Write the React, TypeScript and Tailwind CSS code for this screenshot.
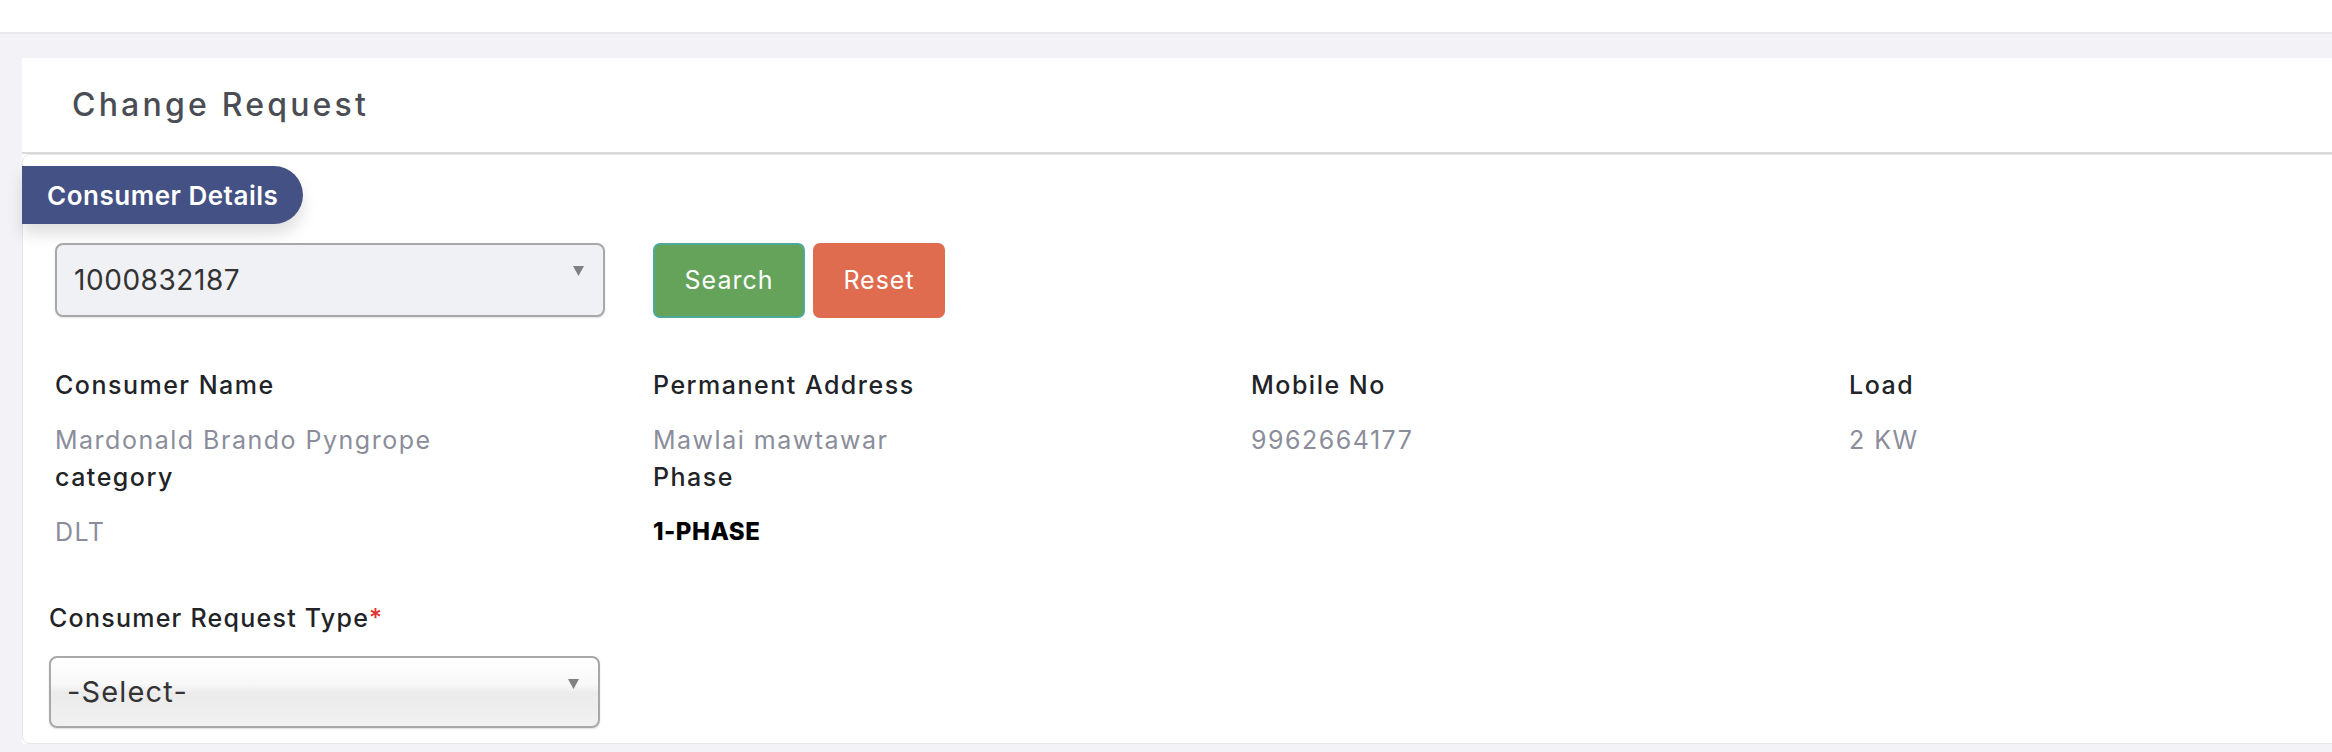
import React from "react";

function Arrow() {
  return (
    <svg width="11" height="10" viewBox="0 0 11 10" className="absolute right-[19px] top-[21px]">
      <polygon points="0,0 11,0 5.5,10" fill="#808080" />
    </svg>
  );
}

function Field({ label, value, strong }: { label: string; value: string; strong?: boolean }) {
  return (
    <div className="px-[24px]">
      <div className="mb-[18px] text-[25px] font-medium leading-[36px] tracking-[0.06em] text-[#212327]">{label}</div>
      <div
        className={
          strong
            ? "text-[24px] font-extrabold leading-[38px] tracking-[0.02em] text-[#000000]"
            : "text-[25px] font-normal leading-[38px] tracking-[0.06em] text-[#8b8d9b]"
        }
      >
        {value}
      </div>
    </div>
  );
}

export default function App() {
  return (
    <div className="h-screen w-full overflow-hidden bg-[#f2f2f7] font-['Inter',sans-serif]">
      <div className="h-[34px] border-b-2 border-[#e7e7ec] bg-white" />
      <div className="pl-[22px] pt-[24px]">
        <div className="w-[2500px] bg-white">
          <div className="flex h-[96px] items-center border-b-2 border-[#d9d9d9] pl-[50px]">
            <h1 className="text-[32px] font-medium tracking-[0.1em] text-[#4a4d54]">Change Request</h1>
          </div>
          <div className="rounded-l-[8px] border border-[#e6e6ea] pb-[15px]">
            <div className="mt-[11px] -ml-px inline-flex h-[58px] items-center rounded-r-full bg-[#435184] pl-[25px] pr-[25px] text-[26px] font-semibold tracking-[0.02em] text-white shadow-[0_10px_16px_rgba(0,0,0,0.13)]">
              Consumer Details
            </div>
            <div className="ml-[8px] mt-[19px] grid grid-cols-[repeat(4,598px)]">
              <div className="px-[24px]">
                <div className="relative flex h-[74px] w-full items-center rounded-[8px] border-2 border-[#a8a8a8] bg-[#f0f1f5] pl-[17px] text-[28px] tracking-[0.02em] text-[#333333] shadow-[0_1px_2px_rgba(0,0,0,0.12)]">
                  1000832187
                  <Arrow />
                </div>
              </div>
              <div className="flex gap-[8px] px-[24px]">
                <button className="h-[75px] w-[152px] rounded-[7px] border-2 border-[#4ea99b] bg-[#65a35b] text-[25px] tracking-[0.04em] text-white">
                  Search
                </button>
                <button className="h-[75px] w-[132px] rounded-[7px] bg-[#df6c4f] text-[25px] tracking-[0.04em] text-white">
                  Reset
                </button>
              </div>
            </div>
            <div className="ml-[8px] mt-[49px] grid grid-cols-[repeat(4,598px)]">
              <Field label="Consumer Name" value="Mardonald Brando Pyngrope" />
              <Field label="Permanent Address" value="Mawlai mawtawar" />
              <Field label="Mobile No" value="9962664177" />
              <Field label="Load" value="2 KW" />
              <Field label="category" value="DLT" />
              <Field label="Phase" value="1-PHASE" strong />
            </div>
            <div className="ml-[26px] mt-[49px] w-[551px]">
              <div className="mb-[20px] text-[25px] font-medium leading-[36px] tracking-[0.05em] text-[#212327]">
                Consumer Request Type<span className="text-[#e3312b]">*</span>
              </div>
              <div className="relative flex h-[72px] w-full items-center rounded-[8px] border-2 border-[#a8a8a8] bg-[linear-gradient(to_bottom,#ffffff_0%,#f8f8f8_38%,#ebebeb_52%,#f1f1f1_100%)] pl-[16px] text-[29px] tracking-[0.04em] text-[#333333] shadow-[0_1px_2px_rgba(0,0,0,0.12)]">
                -Select-
                <Arrow />
              </div>
            </div>
          </div>
        </div>
      </div>
    </div>
  );
}
